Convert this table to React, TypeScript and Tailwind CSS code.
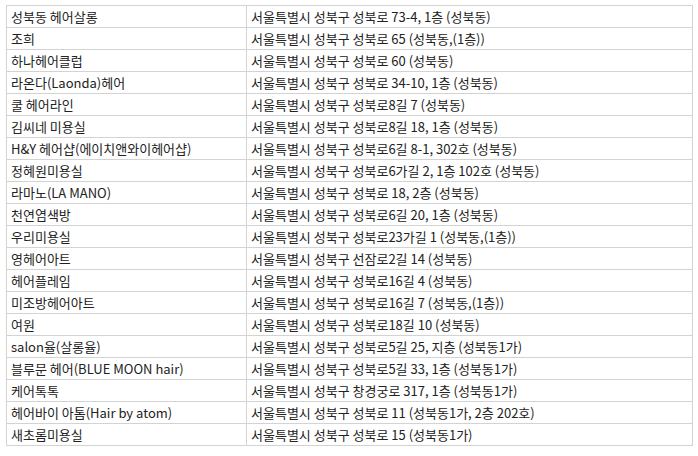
const rows: [string, string][] = [
  ["성북동 헤어살롱", "서울특별시 성북구 성북로 73-4, 1층 (성북동)"],
  ["조희", "서울특별시 성북구 성북로 65 (성북동,(1층))"],
  ["하나헤어클럽", "서울특별시 성북구 성북로 60 (성북동)"],
  ["라온다(Laonda)헤어", "서울특별시 성북구 성북로 34-10, 1층 (성북동)"],
  ["쿨 헤어라인", "서울특별시 성북구 성북로8길 7 (성북동)"],
  ["김씨네 미용실", "서울특별시 성북구 성북로8길 18, 1층 (성북동)"],
  ["H&Y 헤어샵(에이치앤와이헤어샵)", "서울특별시 성북구 성북로6길 8-1, 302호 (성북동)"],
  ["정혜원미용실", "서울특별시 성북구 성북로6가길 2, 1층 102호 (성북동)"],
  ["라마노(LA MANO)", "서울특별시 성북구 성북로 18, 2층 (성북동)"],
  ["천연염색방", "서울특별시 성북구 성북로6길 20, 1층 (성북동)"],
  ["우리미용실", "서울특별시 성북구 성북로23가길 1 (성북동,(1층))"],
  ["영헤어아트", "서울특별시 성북구 선잠로2길 14 (성북동)"],
  ["헤어플레임", "서울특별시 성북구 성북로16길 4 (성북동)"],
  ["미조방헤어아트", "서울특별시 성북구 성북로16길 7 (성북동,(1층))"],
  ["여원", "서울특별시 성북구 성북로18길 10 (성북동)"],
  ["salon율(살롱율)", "서울특별시 성북구 성북로5길 25, 지층 (성북동1가)"],
  ["블루문 헤어(BLUE MOON hair)", "서울특별시 성북구 성북로5길 33, 1층 (성북동1가)"],
  ["케어톡톡", "서울특별시 성북구 창경궁로 317, 1층 (성북동1가)"],
  ["헤어바이 아톰(Hair by atom)", "서울특별시 성북구 성북로 11 (성북동1가, 2층 202호)"],
  ["새초롬미용실", "서울특별시 성북구 성북로 15 (성북동1가)"],
];

export default function App() {
  return (
    <div className="bg-white w-[698px] h-[456px] pt-[5px] pl-[6px] font-['Noto_Sans_CJK_KR',sans-serif] text-[13px] text-[#222]">
      <table className="border-collapse table-fixed w-[686px]">
        <colgroup>
          <col className="w-[240px]" />
          <col className="w-[446px]" />
        </colgroup>
        <tbody>
          {rows.map(([name, addr], i) => (
            <tr key={i} className="h-[22px]">
              <td className="border border-[#d3d3d3] px-[4px] py-0 leading-[21px] whitespace-nowrap">{name}</td>
              <td className="border border-[#d3d3d3] px-[4px] py-0 leading-[21px] whitespace-nowrap">{addr}</td>
            </tr>
          ))}
        </tbody>
      </table>
    </div>
  );
}
